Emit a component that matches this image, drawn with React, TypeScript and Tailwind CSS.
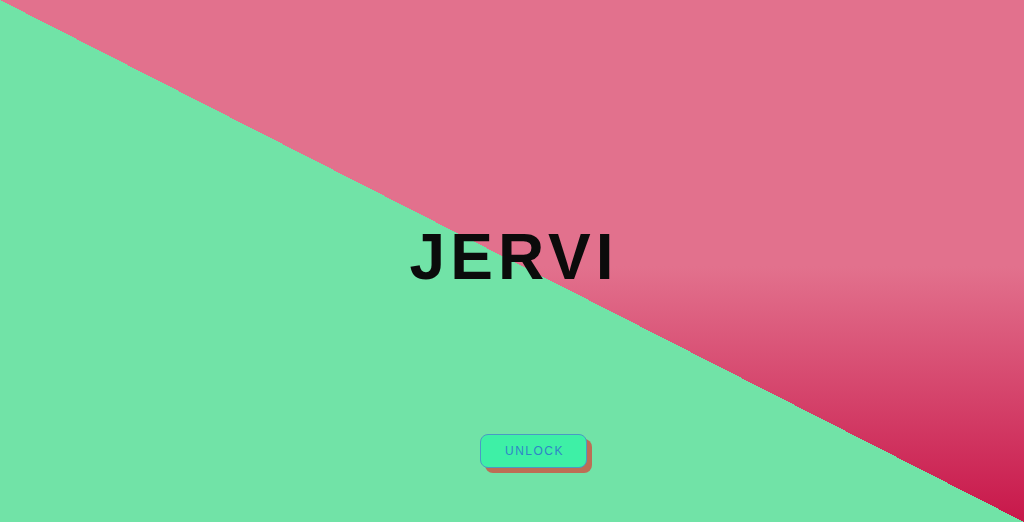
import React from "react";

export default function App() {
  return (
    <div
      className="w-full h-[522px] overflow-hidden flex flex-col items-center pt-[225px] bg-[linear-gradient(to_top_right,#71e3a7_50%,transparent_50%),linear-gradient(to_bottom,#e2718d_51%,#c8174a_100%)]"
      style={{ fontFamily: '"Liberation Sans", Arial, sans-serif' }}
    >
      <h1 className="text-[64px] leading-[64px] font-bold text-[#0b0b0b] tracking-[5px] pl-[4px] m-0">
        JERVI
      </h1>
      <button className="mt-[145px] ml-[43px] w-[107px] h-[34px] rounded-lg border border-[#4a9ac4] bg-[#3ef0a6] shadow-[5px_5px_0_#bd6e55] text-[12px] tracking-[1.5px] text-[#2e86c6] flex items-center justify-center pl-[2px]">
        UNLOCK
      </button>
    </div>
  );
}
